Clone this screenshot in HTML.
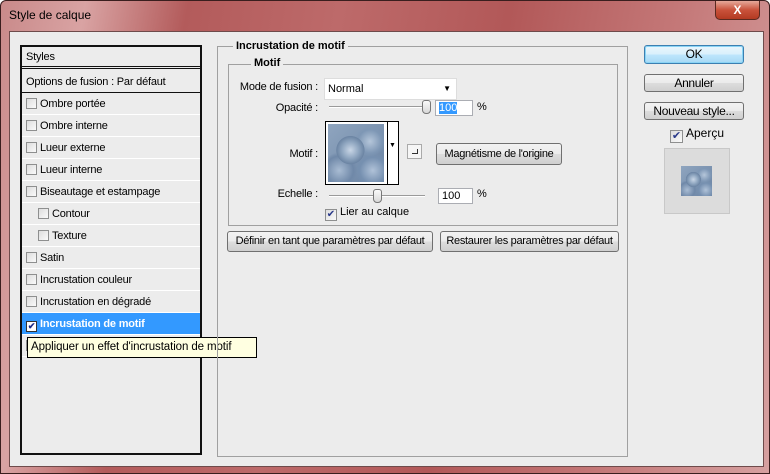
<!DOCTYPE html>
<html><head><style>
*{box-sizing:border-box;margin:0;padding:0}
body{width:770px;height:474px;overflow:hidden;font-family:"Liberation Sans",sans-serif;font-size:11px;color:#000;background:#fff}
.win{position:absolute;left:0;top:0;width:770px;height:474px;background:linear-gradient(100deg,#c98a8a 0%,#d9a3a3 10%,#b35b5b 22%,#bd6a6a 40%,#b25858 60%,#c47878 80%,#d6a0a0 100%);border:1px solid #3a1e1e;border-radius:6px 6px 0 0}
.title{position:absolute;left:8px;top:7px;font-size:12px;color:#000}
.close{position:absolute;left:714px;top:0;width:45px;height:19px;background:linear-gradient(#e6a99a,#c9523b 50%,#b33a22);border:1px solid #5a2a20;border-top:none;border-radius:0 0 5px 5px;color:#fff;font-weight:bold;text-align:center;font-size:12px;line-height:18px}
.client{position:absolute;left:8px;top:30px;width:755px;height:436px;background:#ececec;border:1px solid #6e4b4b}
.a{position:absolute;white-space:nowrap}
.lab{position:absolute;white-space:nowrap;right:445px;text-align:right;letter-spacing:-0.2px}
.lp{left:10px;top:13px;width:182px;height:410px;border:2px solid #111;background:#ececec}
.row{position:absolute;left:0;width:178px;height:22px;border-bottom:1px solid #fff;line-height:22px;padding-left:4px;white-space:nowrap;letter-spacing:-0.2px}
.cb{display:inline-block;width:11px;height:11px;border:1px solid #8e8f8f;background:linear-gradient(135deg,#ddd,#fafafa);vertical-align:-2px;margin-right:3px}
.btn{position:absolute;border:1px solid #707070;border-radius:3px;background:linear-gradient(#f2f2f2 0%,#ebebeb 50%,#dddddd 51%,#cfcfcf 100%);text-align:center;font-size:11px;white-space:nowrap;letter-spacing:-0.3px}
.grp{position:absolute;border:1px solid #a0a0a0}
.lg{position:absolute;background:#ececec;font-weight:bold;padding:0 3px;white-space:nowrap}
.inp{position:absolute;background:#fff;border:1px solid #abadb3}
.track{position:absolute;height:2px;border-top:1px solid #9a9a9a;border-bottom:1px solid #fff}
.thumb{position:absolute;width:9px;height:14px;border:1px solid #777;border-radius:3px 3px 4px 4px;background:linear-gradient(#fafafa,#d8d8d8)}
.tex{background:radial-gradient(circle at 40% 45%,#c9d6e6 0,#8fa6c0 18%,#6b84a3 30%,transparent 31%),radial-gradient(circle at 75% 30%,#b5c6da 0,#7e97b5 20%,transparent 26%),radial-gradient(circle at 20% 80%,#a9bcd3 0,#6f88a8 22%,transparent 28%),radial-gradient(circle at 80% 80%,#b0c2d8 0,#7690b0 20%,transparent 28%),linear-gradient(135deg,#8fa5bf,#6a83a3)}
</style></head><body>
<div class="win">
<div class="title">Style de calque</div>
<div class="close">X</div>
<div class="client">
 <div class="a lp">
  <div class="row" style="top:0;height:22px;border-bottom:3px double #111;line-height:20px">Styles</div>
  <div class="row" style="top:24px;border-bottom:1px solid #111">Options de fusion : Par défaut</div>
  <div class="row" style="top:46px"><span class="cb"></span>Ombre portée</div>
  <div class="row" style="top:68px"><span class="cb"></span>Ombre interne</div>
  <div class="row" style="top:90px"><span class="cb"></span>Lueur externe</div>
  <div class="row" style="top:112px"><span class="cb"></span>Lueur interne</div>
  <div class="row" style="top:134px"><span class="cb"></span>Biseautage et estampage</div>
  <div class="row" style="top:156px;padding-left:16px"><span class="cb"></span>Contour</div>
  <div class="row" style="top:178px;padding-left:16px"><span class="cb"></span>Texture</div>
  <div class="row" style="top:200px"><span class="cb"></span>Satin</div>
  <div class="row" style="top:222px"><span class="cb"></span>Incrustation couleur</div>
  <div class="row" style="top:244px"><span class="cb"></span>Incrustation en dégradé</div>
  <div class="row" style="top:266px;background:#3399ff;color:#fff;font-weight:bold"><span class="cb" style="background:#fff;border-color:#333;color:#1a2a8a;font-size:9px;line-height:9px;text-align:center">✔</span>Incrustation de motif</div>
  <div class="row" style="top:288px"><span class="cb"></span></div>
 </div>
 <div class="a" style="left:17px;top:305px;width:230px;height:21px;background:#ffffe1;border:1px solid #000;font-size:11.5px;line-height:19px;padding-left:3px;letter-spacing:-0.1px">Appliquer un effet d'incrustation de motif</div>

 <div class="grp" style="left:207px;top:14px;width:411px;height:411px"></div>
 <div class="lg" style="left:223px;top:8px">Incrustation de motif</div>
 <div class="grp" style="left:218px;top:32px;width:390px;height:162px"></div>
 <div class="lg" style="left:241px;top:25px">Motif</div>

 <div class="lab" style="top:49px">Mode de fusion :</div>
 <div class="inp" style="left:314px;top:46px;width:133px;height:22px;border-color:#ddd;line-height:20px;padding-left:3px">Normal<span style="position:absolute;right:5px;top:0;font-size:8px">▼</span></div>
 <div class="lab" style="top:70px">Opacité :</div>
 <div class="track" style="left:319px;top:74px;width:102px"></div>
 <div class="thumb" style="left:412px;top:68px"></div>
 <div class="inp" style="left:425px;top:68px;width:38px;height:16px;padding-left:3px;line-height:14px"><span style="background:#3399ff;color:#fff">100</span></div>
 <div class="a" style="left:467px;top:69px">%</div>

 <div class="lab" style="top:116px">Motif :</div>
 <div class="a" style="left:315px;top:89px;width:74px;height:64px;border:1px solid #000;background:#fff"></div>
 <div class="a tex" style="left:318px;top:92px;width:56px;height:58px"></div>
 <div class="a" style="left:377px;top:89px;width:1px;height:64px;background:#000"></div>
 <div class="a" style="left:379px;top:110px;font-size:7px">▼</div>
 <div class="a" style="left:397px;top:112px;width:15px;height:15px;border:1px solid #aaa;background:#f6f6f6"><div style="position:absolute;left:4px;top:4px;width:6px;height:5px;border:1px solid #333;border-top:none;border-left:none"></div></div>
 <div class="btn" style="left:426px;top:111px;width:126px;height:22px;line-height:20px">Magnétisme de l'origine</div>

 <div class="lab" style="top:156px">Echelle :</div>
 <div class="track" style="left:319px;top:163px;width:96px"></div>
 <div class="thumb" style="left:363px;top:157px"></div>
 <div class="inp" style="left:428px;top:156px;width:35px;height:16px;padding-left:3px;line-height:14px">100</div>
 <div class="a" style="left:467px;top:156px">%</div>
 <div class="a" style="left:315px;top:173px;line-height:14px"><span class="cb" style="width:12px;height:12px;color:#2a3a8a;font-size:10px;line-height:10px;text-align:center;vertical-align:-2px">✔</span>Lier au calque</div>

 <div class="btn" style="left:217px;top:199px;width:206px;height:21px;line-height:19px">Définir en tant que paramètres par défaut</div>
 <div class="btn" style="left:430px;top:199px;width:179px;height:21px;line-height:19px">Restaurer les paramètres par défaut</div>

 <div class="btn" style="left:634px;top:13px;width:100px;height:19px;line-height:17px;border-color:#3c7fb1;box-shadow:0 0 0 1px #8ad4f5 inset;background:linear-gradient(#eaf6fd,#d9f0fc 50%,#bee6fd 51%,#a7d9f5);font-size:12px">OK</div>
 <div class="btn" style="left:634px;top:42px;width:100px;height:18px;line-height:16px;font-size:12px">Annuler</div>
 <div class="btn" style="left:634px;top:70px;width:100px;height:18px;line-height:16px;font-size:12px">Nouveau style...</div>
 <div class="a" style="left:660px;top:94px;font-size:12px;line-height:14px"><span class="cb" style="width:13px;height:13px;color:#2a3a8a;font-size:11px;line-height:11px;text-align:center;vertical-align:-2px">✔</span>Aperçu</div>
 <div class="a" style="left:654px;top:116px;width:66px;height:66px;background:#dcdcdc;border:1px solid #c8c8c8"></div>
 <div class="a tex" style="left:671px;top:134px;width:31px;height:30px"></div>
</div>
</div>
</body></html>
